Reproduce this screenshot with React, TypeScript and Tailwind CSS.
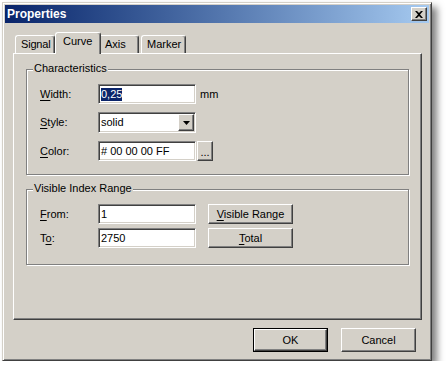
import React from 'react';

// Win2000 style "Properties" dialog, Curve tab
const raised =
  'border border-t-white border-l-white border-r-[#404040] border-b-[#404040] shadow-[inset_-1px_-1px_0_#808080]';
const sunken =
  'border border-t-[#808080] border-l-[#808080] border-r-white border-b-white shadow-[inset_1px_1px_0_#404040,inset_-1px_-1px_0_#d4d0c8]';
const etched = 'border border-[#808080] shadow-[inset_1px_1px_0_#ffffff,1px_1px_0_#ffffff]';

function Key({ k, rest }: { k: string; rest: string }) {
  return (
    <span>
      <span className="underline underline-offset-[2px]">{k}</span>
      {rest}
    </span>
  );
}

function Field({ value, selected }: { value: string; selected?: boolean }) {
  return (
    <div className={`${sunken} bg-white w-[98px] h-[20px] flex items-center pl-[2px]`}>
      {selected ? <span className="bg-[#0a246a] text-white leading-[13px]">{value}</span> : <span>{value}</span>}
    </div>
  );
}

function Button({ children, className = '' }: { children: React.ReactNode; className?: string }) {
  return (
    <div className={`${raised} bg-[#d4d0c8] flex items-center justify-center ${className}`}>{children}</div>
  );
}

function Group({ title, className, children }: { title: string; className: string; children: React.ReactNode }) {
  return (
    <div className={`relative ${etched} ${className}`}>
      <span className="absolute top-[-8px] left-[6px] px-[1px] bg-[#d4d0c8] leading-[13px]">{title}</span>
      {children}
    </div>
  );
}

function Row({ label, children }: { label: React.ReactNode; children: React.ReactNode }) {
  return (
    <div className="flex items-center">
      <div className="w-[58px]">{label}</div>
      {children}
    </div>
  );
}

export default function App() {
  return (
    <div className="pl-[2px] pt-[2px] font-['Liberation_Sans',Arial,sans-serif] text-[11px] text-black">
      <div className="w-[430px] h-[359px] bg-[#d4d0c8] border border-t-[#d4d0c8] border-l-[#d4d0c8] border-r-[#404040] border-b-[#404040] p-[2px] flex flex-col shadow-[inset_1px_1px_0_#ffffff,inset_-1px_-1px_0_#808080,5px_5px_7px_rgba(0,0,0,0.5)]">
        {/* title bar */}
        <div className="h-[18px] bg-gradient-to-r from-[#0a246a] to-[#a6caf0] flex items-center justify-between pl-[2px] pr-[2px]">
          <span className="text-white font-bold text-[12px]">Properties</span>
          <div className={`${raised} bg-[#d4d0c8] w-[16px] h-[14px] flex items-center justify-center`}>
            <svg width="8" height="7" viewBox="0 0 8 7">
              <path d="M0 0h2l2 2 2-2h2L5 3.5 8 7H6L4 5 2 7H0l3-3.5z" fill="#000" />
            </svg>
          </div>
        </div>

        {/* body */}
        <div className="flex flex-col pt-[9px] pl-[8px] pr-[7px]">
          {/* tabs */}
          <div className="flex items-end h-[21px]">
            <div className="ml-[2px] w-[40px] h-[18px] border-t border-l border-r border-t-white border-l-white border-r-[#404040] rounded-t-[3px] shadow-[inset_-1px_0_0_#808080] flex items-center pl-[5px] tracking-[-0.2px]">
              Signal
            </div>
            <div className="relative z-10 -mb-[1px] w-[46px] h-[22px] bg-[#d4d0c8] border-t border-l border-r border-t-white border-l-white border-r-[#404040] rounded-t-[3px] shadow-[inset_-1px_0_0_#808080] pl-[7px] pt-[2px] leading-[13px]">
              Curve
            </div>
            <div className="w-[38px] h-[18px] border-t border-r border-t-white border-r-[#404040] rounded-tr-[3px] shadow-[inset_-1px_0_0_#808080] flex items-center pl-[4px]">
              Axis
            </div>
            <div className="ml-[2px] w-[45px] h-[18px] border-t border-l border-r border-t-white border-l-white border-r-[#404040] rounded-t-[3px] shadow-[inset_-1px_0_0_#808080] flex items-center pl-[5px]">
              Marker
            </div>
          </div>

          {/* panel */}
          <div className={`${raised} h-[267px] px-[12px] pt-[15px] flex flex-col`}>
            <Group title="Characteristics" className="h-[106px] pt-[14px] pl-[13px] flex flex-col gap-[8px]">
              <Row label={<Key k="W" rest="idth:" />}>
                <Field value="0,25" selected />
                <span className="ml-[4px]">mm</span>
              </Row>
              <Row label={<Key k="S" rest="tyle:" />}>
                <div className={`${sunken} bg-white w-[98px] h-[21px] flex items-center justify-between pl-[2px] pr-[1px]`}>
                  <span>solid</span>
                  <div className={`${raised} bg-[#d4d0c8] w-[16px] h-[17px] flex items-center justify-center`}>
                    <svg width="7" height="4" viewBox="0 0 7 4">
                      <path d="M0 0h7L3.5 4z" fill="#000" />
                    </svg>
                  </div>
                </div>
              </Row>
              <Row label={<Key k="C" rest="olor:" />}>
                <Field value="# 00 00 00 FF" />
                <Button className="ml-[1px] w-[16px] h-[20px]">
                  <span className="leading-[11px] pt-[3px]">...</span>
                </Button>
              </Row>
            </Group>

            <Group title="Visible Index Range" className="mt-[14px] h-[76px] pt-[14px] pl-[13px] flex flex-col gap-[4px]">
              <Row label={<Key k="F" rest="rom:" />}>
                <Field value="1" />
                <Button className="ml-[12px] w-[85px] h-[20px]">
                  <Key k="V" rest="isible Range" />
                </Button>
              </Row>
              <Row
                label={
                  <span>
                    T<span className="underline underline-offset-[2px]">o</span>:
                  </span>
                }
              >
                <Field value="2750" />
                <Button className="ml-[12px] w-[85px] h-[20px]">
                  <Key k="T" rest="otal" />
                </Button>
              </Row>
            </Group>
          </div>

          {/* dialog buttons */}
          <div className="flex justify-end gap-[13px] pr-[6px] mt-[8px]">
            <div className="border border-black">
              <Button className="w-[73px] h-[22px]">OK</Button>
            </div>
            <Button className="w-[75px] h-[24px]">Cancel</Button>
          </div>
        </div>
      </div>
    </div>
  );
}
